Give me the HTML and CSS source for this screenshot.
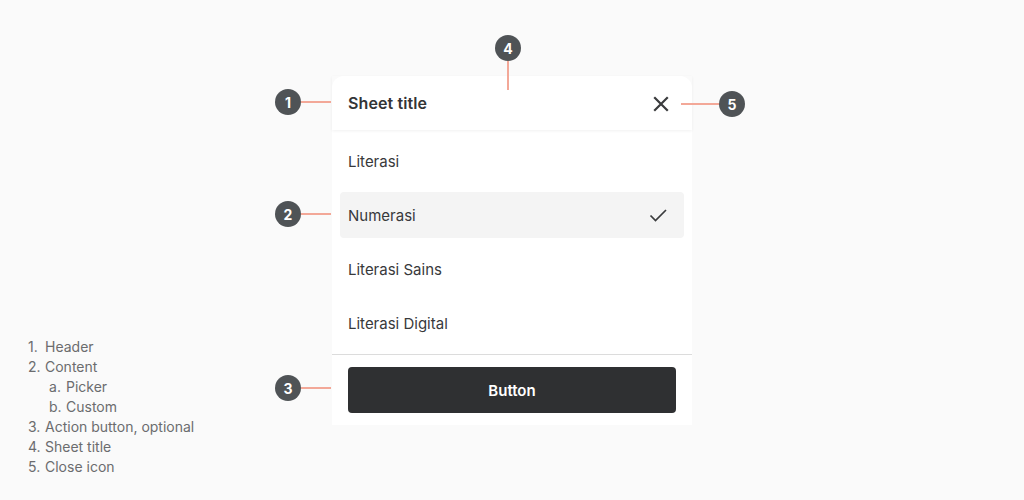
FILE: index.html
```html
<!DOCTYPE html>
<html>
<head>
<meta charset="utf-8">
<link rel="stylesheet" href="styles.css">
</head>
<body>
<div class="page">
  <ol class="legend">
    <li>Header</li>
    <li>Content
      <ol class="sub">
        <li>Picker</li>
        <li>Custom</li>
      </ol>
    </li>
    <li>Action button, optional</li>
    <li>Sheet title</li>
    <li>Close icon</li>
  </ol>
  <div class="sheet">
    <div class="header">
      <span class="title">Sheet title</span>
      <svg class="close" width="16" height="16" viewBox="0 0 16 16"><path d="M2 2L14 14M14 2L2 14" stroke="#3a3b3d" stroke-width="2.2" stroke-linecap="square" fill="none"/></svg>
    </div>
    <div class="list">
      <div class="item">Literasi</div>
      <div class="item selected">Numerasi
        <svg class="check" width="20" height="20" viewBox="0 0 20 20"><path d="M2.5 10.5L7.5 15.5L18 5" stroke="#3a3b3d" stroke-width="1.7" fill="none"/></svg>
      </div>
      <div class="item">Literasi Sains</div>
      <div class="item">Literasi Digital</div>
    </div>
    <div class="footer">
      <button class="btn">Button</button>
    </div>

    <div class="anno a1"><span class="badge">1</span><span class="hline"></span></div>
    <div class="anno a2"><span class="badge">2</span><span class="hline"></span></div>
    <div class="anno a3"><span class="badge">3</span><span class="hline"></span></div>
    <div class="anno a4"><span class="badge">4</span><span class="vline"></span></div>
    <div class="anno a5"><span class="hline"></span><span class="badge">5</span></div>
  </div>
</div>
</body>
</html>
```
FILE: styles.css
```css
* { box-sizing: border-box; }
html, body { margin: 0; padding: 0; }
body {
  background: #fafafa;
  font-family: Inter, "Noto Sans", sans-serif;
  width: 1024px;
  height: 500px;
  overflow: hidden;
}
.page {
  display: flex;
  align-items: flex-start;
  height: 500px;
}
.legend {
  align-self: flex-end;
  width: 332px;
  margin: 0 0 23px 0;
  padding: 0 0 0 28px;
  list-style: none;
  counter-reset: n;
  color: #6b6c6e;
  font-size: 14px;
  line-height: 20px;
}
.legend > li { counter-increment: n; }
.legend > li::before { content: counter(n) "."; display: inline-block; width: 17px; }
.legend .sub {
  list-style: none;
  margin: 0;
  padding: 0 0 0 21px;
  counter-reset: s;
}
.legend .sub li { counter-increment: s; }
.legend .sub li::before { content: counter(s, lower-alpha) "."; display: inline-block; width: 17px; }

.sheet {
  position: relative;
  margin-top: 76px;
  width: 360px;
  background: #fff;
  border-radius: 12px 12px 0 0;
}
.header {
  height: 54px;
  display: flex;
  align-items: center;
  justify-content: space-between;
  padding: 0 23px 0 16px;
  box-shadow: 0 1px 3px rgba(0,0,0,0.06);
  position: relative;
}
.title {
  font-size: 16px;
  font-weight: 600;
  color: #333436;
  letter-spacing: 0.1px;
}
.close { display: block; margin-top: 1px; }
.list {
  padding: 8px;
  display: flex;
  flex-direction: column;
  gap: 8px;
}
.item {
  height: 46px;
  display: flex;
  align-items: center;
  justify-content: space-between;
  padding: 0 16px 0 8px;
  font-size: 15px;
  color: #38393b;
  border-radius: 4px;
}
.item.selected { background: #f4f4f4; }
.check { display: block; }
.footer {
  border-top: 1px solid #dcdcdc;
  padding: 12px 16px 12px;
}
.btn {
  display: block;
  width: 100%;
  height: 46px;
  border: none;
  border-radius: 4px;
  background: #2f3032;
  color: #fff;
  font-family: Inter, "Noto Sans", sans-serif;
  font-size: 15px;
  font-weight: 600;
}

.anno {
  position: absolute;
  display: flex;
  align-items: center;
}
.badge {
  width: 26px;
  height: 26px;
  border-radius: 50%;
  background: #4f5356;
  color: #fff;
  font-size: 14px;
  font-weight: 700;
  display: flex;
  align-items: center;
  justify-content: center;
  flex: none;
}
.hline { height: 2px; background: #f3a898; flex: none; width: 30px; }
.vline { width: 2px; background: #f3a898; height: 29px; flex: none; }
.a1 { left: -57px; top: 13px; }
.a2 { left: -57px; top: 125px; }
.a3 { left: -57px; top: 299px; }
.a4 { left: 163px; top: -41px; flex-direction: column; }
.a5 { left: 349px; top: 15px; }
.a5 .hline { width: 38px; }
```
